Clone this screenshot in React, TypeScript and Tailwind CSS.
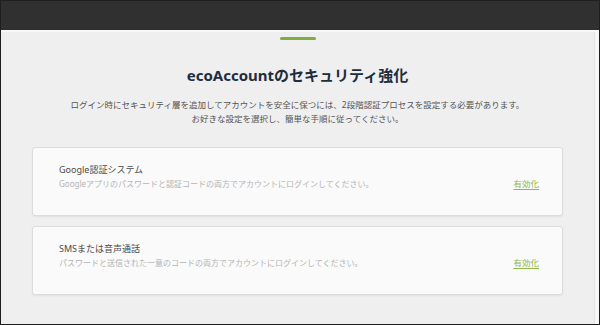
import React from 'react';

interface MethodCardProps {
    title: string;
    description: string;
}

function MethodCard({ title, description }: MethodCardProps) {
    return (
        <div className="h-[69px] rounded-[3px] border border-[#dcdcdc] bg-[#fafafa] pl-[26px] pr-[23px] pt-[15px] shadow-[0_1px_2px_rgba(0,0,0,0.06)]">
            <div className="text-[9px] leading-[14px] text-[#4a4a4a]">{title}</div>
            <div className="flex items-center justify-between">
                <span className="text-[8px] leading-[14px] text-[#b4b4b4]">{description}</span>
                <a className="text-[8.5px] leading-[14px] text-[#8fb84a] underline underline-offset-2 cursor-pointer">
                    有効化
                </a>
            </div>
        </div>
    );
}

export default function App() {
    return (
        <div
            className="flex h-[325px] w-[600px] flex-col overflow-hidden border border-[#1e1e1e] bg-[#efeff0]"
            style={{ fontFamily: '"Noto Sans", "Noto Sans CJK JP", sans-serif' }}
        >
            {/* Top bar */}
            <div className="h-[31px] shrink-0 border-b-2 border-[#f8f8f8] bg-[#303030]" />

            <div className="flex flex-1">
                <div className="flex flex-1 flex-col px-[31px]">
                    <div className="mx-auto mt-[5px] h-[3px] w-[36px] rounded-sm bg-[#7fae3e]" />

                    <h1 className="mt-[25px] text-center text-[15px] font-bold leading-[20px] text-[#1f2d3d]">
                        ecoAccountのセキュリティ強化
                    </h1>

                    <div className="mt-[13px] text-center text-[8.5px] leading-[14px] text-[#555]">
                        <p>
                            ログイン時にセキュリティ層を追加してアカウントを安全に保つには、2段階認証プロセスを設定する必要があります。
                        </p>
                        <p>お好きな設定を選択し、簡単な手順に従ってください。</p>
                    </div>

                    <div className="mt-[21px] flex flex-col gap-[10px]">
                        <MethodCard
                            title="Google認証システム"
                            description="Googleアプリのパスワードと認証コードの両方でアカウントにログインしてください。"
                        />
                        <MethodCard
                            title="SMSまたは音声通話"
                            description="パスワードと送信された一意のコードの両方でアカウントにログインしてください。"
                        />
                    </div>
                </div>

                {/* Right edge strip */}
                <div className="w-[5px] shrink-0 border-l border-[#e2e2e2] bg-[#f7f7f7]" />
            </div>
        </div>
    );
}
